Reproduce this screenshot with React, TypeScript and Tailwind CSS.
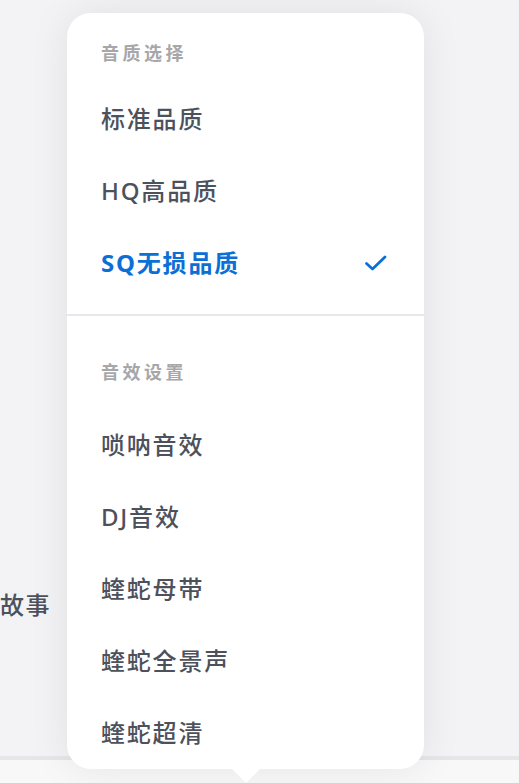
import React from "react";

const font = { fontFamily: '"Noto Sans", "Noto Sans CJK SC", sans-serif' };

function Check() {
  return (
    <svg width="24" height="18" viewBox="0 0 24 18" fill="none">
      <path d="M2.5 9.5 L8.5 15 L21 3" stroke="#0b6fd6" strokeWidth="2.8" strokeLinecap="round" strokeLinejoin="round" />
    </svg>
  );
}

function Header({ children }: { children: React.ReactNode }) {
  return (
    <div className="h-[36px] flex items-center pl-[34px] text-[18px] font-bold tracking-[3.5px] text-[#a7a7a9]">
      {children}
    </div>
  );
}

function Item({ children, active }: { children: React.ReactNode; active?: boolean }) {
  return (
    <div className="h-[72px] flex items-center justify-between pl-[34px] pr-[36px]">
      <span
        className={
          active
            ? "text-[24px] font-bold tracking-[1.8px] text-[#0b6fd6]"
            : "text-[24px] font-medium tracking-[1.8px] text-[#4d515c]"
        }
      >
        {children}
      </span>
      {active && <Check />}
    </div>
  );
}

export default function App() {
  return (
    <div className="relative w-[519px] h-[783px] overflow-hidden bg-[#f3f3f5]" style={font}>
      <div className="flex flex-col h-full">
        <div className="flex-1 pt-[589px]">
          <div className="text-[24px] font-medium tracking-[1.5px] text-[#4d515c] leading-[32px]">故事</div>
        </div>
        <div className="h-[27px] bg-[#f8f8f9] border-t-[4px] border-[#e6e6ea]" />
      </div>

      <div className="absolute left-[67px] top-[13px] w-[357px] h-[756px] bg-white rounded-[24px] shadow-[0_0_40px_rgba(0,0,0,0.08)]">
        <div className="pt-[22px]">
          <Header>音质选择</Header>
          <div className="h-[12px]" />
          <Item>标准品质</Item>
          <Item>HQ高品质</Item>
          <Item active>SQ无损品质</Item>
          <div className="h-[15px]" />
          <div className="h-[2px] bg-[#e8e8ea]" />
          <div className="h-[38px]" />
          <Header>音效设置</Header>
          <div className="h-[19px]" />
          <Item>唢呐音效</Item>
          <Item>DJ音效</Item>
          <Item>蝰蛇母带</Item>
          <Item>蝰蛇全景声</Item>
          <Item>蝰蛇超清</Item>
        </div>
      </div>

      <div className="absolute left-[232px] top-[769px] w-0 h-0 border-l-[14px] border-r-[14px] border-t-[14px] border-l-transparent border-r-transparent border-t-white" />
    </div>
  );
}
